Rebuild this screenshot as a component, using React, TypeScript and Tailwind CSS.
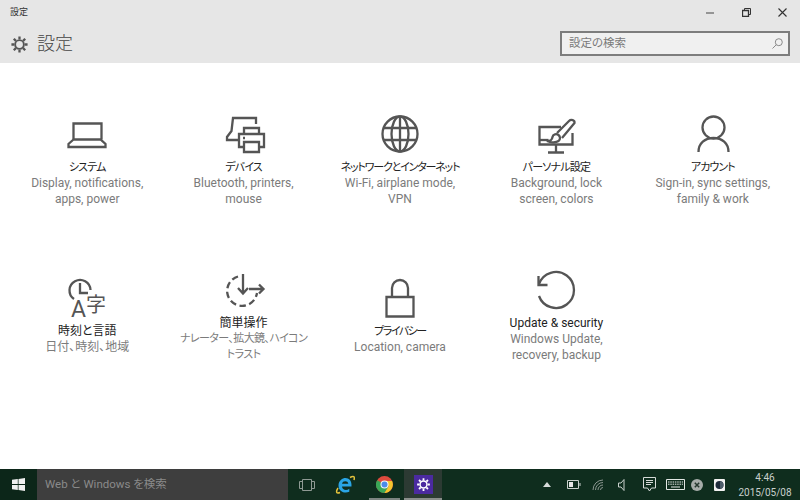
import type { ReactNode } from 'react';

const stroke = '#555555';

function Icon({ children }: { children: ReactNode }) {
  return (
    <svg width="44" height="44" viewBox="0 0 44 44" fill="none" stroke={stroke} strokeWidth="2.300" className="overflow-visible">
      {children}
    </svg>
  );
}

// katakana in the reference font is much narrower than Noto's, so those lines get tightened
const kanaTitle = 'text-[11px] tracking-[-0.8px]';
const kanaDesc = 'text-[11px] tracking-[-0.6px]';

const items = [
  {
    title: 'システム',
    titleClass: kanaTitle,
    desc: ['Display, notifications,', 'apps, power'],
    icon: (
      <Icon>
        <path d="M8.500 27.500V11.500h28v16" />
        <path d="M8.500 27.500l-5 4.500v3h37v-3l-5-4.500z" />
      </Icon>
    ),
  },
  {
    title: 'デバイス',
    titleClass: kanaTitle,
    desc: ['Bluetooth, printers,', 'mouse'],
    icon: (
      <Icon>
        <path d="M34 12V6H11l-1.500 13-4.500 6v3h12" />
        <path d="M22 22v-6h15v6" />
        <path d="M22 35h-5V22h25v13h-5" />
        <path d="M22 30h15v10H22z" />
        <path d="M21 26h2" />
      </Icon>
    ),
  },
  {
    title: 'ネットワークとインターネット',
    titleClass: 'text-[11px] tracking-[-1.2px]',
    desc: ['Wi-Fi, airplane mode,', 'VPN'],
    icon: (
      <Icon>
        <circle cx="22" cy="22" r="17.500" />
        <ellipse cx="22" cy="22" rx="8.500" ry="17.500" />
        <path d="M22 4.500v35M6 16h32M6 28h32" />
      </Icon>
    ),
  },
  {
    title: 'パーソナル設定',
    titleClass: kanaTitle,
    desc: ['Background, lock', 'screen, colors'],
    icon: (
      <Icon>
        <path d="M27 15H5.500v17.500h33V21" />
        <path d="M22 32.500v7M14 40.500h16" />
        <path d="M5.500 28h9" />
        <path d="M13 29c4 0 5-1 5.500-4s4-3.500 6-2 2 4.500 0 6-7.500 2-11.500 0z" />
        <path d="M23 21L35 9c2-2 6-1 5.500 2L28 26" />
      </Icon>
    ),
  },
  {
    title: 'アカウント',
    titleClass: 'text-[11px] tracking-[-1px]',
    desc: ['Sign-in, sync settings,', 'family & work'],
    icon: (
      <Icon>
        <circle cx="22.500" cy="15.500" r="11" />
        <path d="M7.500 40c0-9 6.500-14 15-14s15 5 15 14" />
      </Icon>
    ),
  },
  {
    title: '時刻と言語',
    desc: ['日付、時刻、地域'],
    icon: (
      <Icon>
        <path d="M9 23a10.500 10.500 0 1 1 16.500-9" />
        <path d="M15 7v10h8" />
        <text x="6" y="41" fontFamily="Roboto, sans-serif" fontSize="23" fill={stroke} stroke="none">A</text>
        <text x="21" y="36" fontFamily="'Noto Sans CJK JP', sans-serif" fontSize="20" fill={stroke} stroke="none">字</text>
      </Icon>
    ),
  },
  {
    title: '簡単操作',
    desc: ['ナレーター、拡大鏡、ハイコン', 'トラスト'],
    descClass: kanaDesc,
    icon: (
      <Icon>
        <path d="M16 8.500A15 15 0 1 0 35 25" strokeDasharray="6.500 3.500" />
        <path d="M21 6v19M16 20l5 5.500 5-5.500" />
        <path d="M27 21h14M37 16.500l4.500 4.500-4.500 4.500" />
      </Icon>
    ),
  },
  {
    title: 'プライバシー',
    titleClass: 'text-[11px] tracking-[-1.500px]',
    desc: ['Location, camera'],
    icon: (
      <Icon>
        <path d="M8.500 21h27v19.500h-27z" />
        <path d="M14 21V12a8 8 0 0 1 16 0v9" />
      </Icon>
    ),
  },
  {
    title: 'Update & security',
    desc: ['Windows Update,', 'recovery, backup'],
    icon: (
      <Icon>
        <path d="M5 16a18 18 0 1 1 0 12" />
        <path d="M4.500 8v9h9" />
      </Icon>
    ),
  },
];

type Item = { title: string; titleClass?: string; desc: string[]; descClass?: string; icon: ReactNode };

function Tile({ item }: { item: Item }) {
  return (
    <div className="flex flex-col items-center justify-center">
      {item.icon}
      <div className={`mt-[4px] leading-[15px] whitespace-nowrap text-[#222222] ${item.titleClass ?? 'text-[12px]'}`}>{item.title}</div>
      {item.desc.map((line) => (
        <div key={line} className={`leading-[16px] whitespace-nowrap text-[#7b7b7b] ${item.descClass ?? 'text-[12px]'}`}>
          {line}
        </div>
      ))}
    </div>
  );
}

function Gear({ size, color }: { size: number; color: string }) {
  return (
    <svg width={size} height={size} viewBox="0 0 20 20" fill="none" stroke={color} strokeWidth="2">
      <circle cx="10" cy="10" r="4.600" />
      <path d="M10 1.500v3M10 15.500v3M1.500 10h3M15.500 10h3M4 4l2.200 2.200M13.800 13.800L16 16M16 4l-2.200 2.200M6.200 13.800L4 16" strokeWidth="2.400" />
    </svg>
  );
}

function Tray() {
  return (
    <div className="ml-auto flex h-full items-center">
      <svg width="8" height="5" viewBox="0 0 8 5" className="mr-[16px]">
        <path d="M4 0l4 5H0z" fill="#d8dcda" />
      </svg>
      <svg width="14" height="9" viewBox="0 0 14 9" className="mr-[11px]" fill="none" stroke="#c9d0cc">
        <path d="M.500.500h11v8H.500z" />
        <path d="M2 2h4v5H2z" fill="#e6e6e6" stroke="none" />
        <path d="M13 3v3" />
      </svg>
      <svg width="12" height="12" viewBox="0 0 12 12" className="mr-[14px]" fill="none" stroke="#8b9690">
        <path d="M1 11A10 10 0 0 1 11 1M3.500 11A7.500 7.500 0 0 1 11 3.500M6 11a5 5 0 0 1 5-5M8.500 11A2.500 2.500 0 0 1 11 8.500" />
      </svg>
      <svg width="7" height="12" viewBox="0 0 7 12" className="mr-[18px]" fill="none" stroke="#c9d0cc">
        <path d="M6 .500v11L3 8H.500V4H3z" />
      </svg>
      <svg width="13" height="15" viewBox="0 0 13 15" className="mr-[10px]" fill="none" stroke="#d5dad7">
        <path d="M.500.500h12v10.500H8.500l-2 3-2-3h-4z" />
        <path d="M3 3.500h7M3 5.500h7M3 7.500h5" />
      </svg>
      <svg width="19" height="11" viewBox="0 0 19 11" className="mr-[6px]" fill="none" stroke="#e2e6e4">
        <path d="M.500.500h18v10H.500z" />
        <path d="M2 3h15M2 5.200h15" strokeDasharray="1.500 .8" />
        <path d="M5 8h9" />
      </svg>
      <svg width="12" height="12" viewBox="0 0 12 12" className="mr-[11px]">
        <circle cx="6" cy="6" r="6" fill="#a6aca9" />
        <path d="M3.800 3.800l4.400 4.400M8.200 3.800L3.800 8.200" stroke="#26382f" strokeWidth="1.500" />
      </svg>
      <svg width="11" height="12" viewBox="0 0 11 12" className="mr-[15px]">
        <rect width="11" height="12" rx="1" fill="#f2f2f2" />
        <circle cx="5.500" cy="6" r="4" fill="#1d2a3a" />
        <path d="M6 2.500a3.500 3.500 0 0 1 0 7z" fill="#4d5c6a" />
      </svg>
      <div className="mr-[10px] flex w-[50px] flex-col items-center text-[10px] leading-[15px] text-[#c9d0cc]">
        <span>4:46</span>
        <span>2015/05/08</span>
      </div>
    </div>
  );
}

export default function App() {
  return (
    <div className="flex h-[500px] w-[800px] flex-col overflow-hidden bg-white [font-family:Roboto,'Noto_Sans_CJK_JP',sans-serif] [font-feature-settings:'palt']">
      <header className="flex h-[63px] shrink-0 flex-col bg-[#e6e6e6]">
        <div className="flex h-[25px] items-center">
          <span className="ml-[10px] text-[9px] text-[#333333]">設定</span>
          <div className="ml-auto flex items-center">
            <svg width="8" height="2" viewBox="0 0 8 2" className="mr-[28px]">
              <path d="M0 1h8" stroke="#444444" />
            </svg>
            <svg width="9" height="9" viewBox="0 0 9 9" className="mr-[27px]" fill="none" stroke="#333333">
              <path d="M.500 2.500h6v6h-6z" strokeWidth="1.300" />
              <path d="M2.500 2.500v-2h6v6h-2" />
            </svg>
            <svg width="9" height="9" viewBox="0 0 9 9" className="mr-[13px]" fill="none" stroke="#333333">
              <path d="M.500.500l8 8M8.500.500l-8 8" strokeWidth="1.100" />
            </svg>
          </div>
        </div>
        <div className="flex flex-1 items-start">
          <div className="mt-[10px] ml-[10px]">
            <Gear size={19} color="#555555" />
          </div>
          <span className="mt-[5px] ml-[8px] text-[18px] leading-[27px] font-light text-[#444444]">設定</span>
          <div className="mt-[6px] mr-[10px] ml-auto flex h-[25px] w-[230px] items-center border-2 border-[#7d7d7d] bg-[#f0f0f0] pr-[5px] pl-[7px]">
            <span className="text-[11.500px] text-[#7a7a7a]">設定の検索</span>
            <svg width="11" height="11" viewBox="0 0 11 11" className="ml-auto" fill="none" stroke="#8a8a8a">
              <circle cx="6.800" cy="4.200" r="3.500" />
              <path d="M4.300 6.700L.500 10.500" />
            </svg>
          </div>
        </div>
      </header>

      <main className="grid flex-1 grid-cols-5 grid-rows-[156px_156px] px-[9px] pt-[18px]">
        {items.map((item: Item) => (
          <Tile key={item.title} item={item} />
        ))}
      </main>

      <footer className="flex h-[31px] shrink-0 items-stretch bg-[#0f2d1e]">
        <div className="flex w-[37px] items-center justify-center bg-[#0c2619]">
          <svg width="13" height="13" viewBox="0 0 13 13" fill="#f0f0f0">
            <path d="M0 1.800l5.800-.8v5.100H0zM6.500.9L13 0v6.100H6.500zM0 6.900h5.800V12L0 11.200zM6.500 6.900H13V13l-6.500-.9z" />
          </svg>
        </div>
        <div className="flex w-[251px] items-center bg-[#3e3e3e] pl-[8px]">
          <span className="text-[11.500px] text-[#8a8a8a]">Web と Windows を検索</span>
        </div>
        <div className="flex w-[37px] items-center justify-center">
          <svg width="16" height="12" viewBox="0 0 16 12" fill="none" stroke="#8f9a94">
            <path d="M3.500.500h9v11h-9zM3.500 2.500h-3v7h3M12.500 2.500h3v7h-3" />
          </svg>
        </div>
        <div className="ml-[1px] flex w-[38px] items-center justify-center">
          <svg width="20" height="19" viewBox="0 0 20 19" fill="none">
            <path d="M3 13c-2.500 4-1.500 6 2 4.500M15 2.500c3.500-2 5-1 4 2.500" stroke="#e2c23c" strokeWidth="1.500" />
            <path d="M14.800 11.500H7c.200 3.500 4.500 4.500 7.300 2.300v3C10 18.800 3.500 17 3.500 10.500 3.500 5.500 7.500 3 10.500 3c3.500 0 6.500 2.700 6 8.500zM7 8.800h6.300c-.200-3.300-5.800-3.300-6.300 0z" fill="#2aa5e6" />
          </svg>
        </div>
        <div className="relative ml-[1px] flex w-[38px] items-center justify-center">
          <svg width="17" height="17" viewBox="0 0 17 17">
            <circle cx="8.500" cy="8.500" r="8.500" fill="#dd4b3e" />
            <path d="M8.500 8.500L1.200 4.200A8.500 8.500 0 0 0 8.500 17l4-6z" fill="#3aa757" />
            <path d="M8.500 5h7.600a8.500 8.500 0 0 1-7.600 12l4-6.500z" fill="#f5c52e" />
            <circle cx="8.500" cy="8.500" r="4" fill="#f4f4f4" />
            <circle cx="8.500" cy="8.500" r="3" fill="#4a8be8" />
          </svg>
          <span className="absolute right-[3px] bottom-0 left-[4px] h-[2px] bg-[#7d8581]" />
        </div>
        <div className="relative ml-[1px] flex w-[38px] items-center justify-center bg-[#2c3a33]">
          <div className="flex h-[19px] w-[19px] items-center justify-center bg-[#4b2aa0]">
            <Gear size={15} color="#ffffff" />
          </div>
          <span className="absolute right-0 bottom-0 left-0 h-[2px] bg-[#8a8f8c]" />
        </div>
        <Tray />
      </footer>
    </div>
  );
}
